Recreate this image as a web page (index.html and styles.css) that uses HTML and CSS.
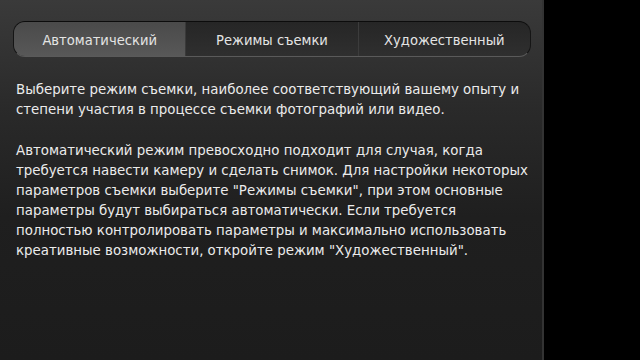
FILE: index.html
```html
<!DOCTYPE html>
<html lang="ru">

<head>
    <meta charset="UTF-8" />
    <title>Режимы съемки</title>
    <link rel="stylesheet" href="styles.css">
</head>

<body>
    <div class="screen">
        <div class="panel">
            <div class="tabs">
                <div class="tab active">Автоматический</div>
                <div class="tab">Режимы съемки</div>
                <div class="tab">Художественный</div>
            </div>
            <div class="help">
                <p>Выберите режим съемки, наиболее соответствующий вашему опыту и степени участия в процессе съемки фотографий или видео.</p>
                <p>Автоматический режим превосходно подходит для случая, когда требуется навести камеру и сделать снимок. Для настройки некоторых параметров съемки выберите "Режимы съемки", при этом основные параметры будут выбираться автоматически. Если требуется полностью контролировать параметры и максимально использовать креативные возможности, откройте режим "Художественный".</p>
            </div>
        </div>
        <div class="side"></div>
    </div>
</body>

</html>
```

FILE: styles.css
```css
* {
    margin: 0;
    padding: 0;
    box-sizing: border-box;
}

body {
    background: #000;
    font-family: "DejaVu Sans Condensed", "DejaVu Sans", sans-serif;
    color: #e6e6e6;
}

.screen {
    display: flex;
    width: 640px;
    height: 360px;
}

.panel {
    width: 544px;
    height: 100%;
    background: linear-gradient(180deg, #3a3a3a 0%, #2a2a2a 30%, #1f1f1f 60%, #1c1c1c 100%);
    border-right: 2px solid #333;
    padding: 21px 13px 0 13px;
}

.side {
    flex: 1;
    background: #000;
}

/* Tabs */
.tabs {
    display: flex;
    height: 36px;
    width: 518px;
    border-radius: 12px;
    border-top: 1px solid #0c0c0c;
    border-left: 1px solid #151515;
    border-right: 1px solid #151515;
    border-bottom: 1px solid #5a5a5a;
    background: linear-gradient(180deg, #262626, #2f2f2f);
    overflow: hidden;
}

.tab {
    flex: 1;
    display: flex;
    align-items: center;
    justify-content: center;
    font-size: 14.6px;
    color: #e4e4e4;
    border-left: 1px solid #3c3c3c;
}

.tab:first-child {
    border-left: none;
}

.tab.active {
    background: linear-gradient(180deg, #4a4a4a, #585858);
    border-right: 1px solid #3a3a3a;
}

.tab.active + .tab {
    border-left: none;
}

/* Help text */
.help {
    padding: 22px 0 0 3px;
    width: 517px;
}

.help p {
    font-size: 14.85px;
    line-height: 20px;
    margin-bottom: 21px;
    color: #ebebeb;
}
```
